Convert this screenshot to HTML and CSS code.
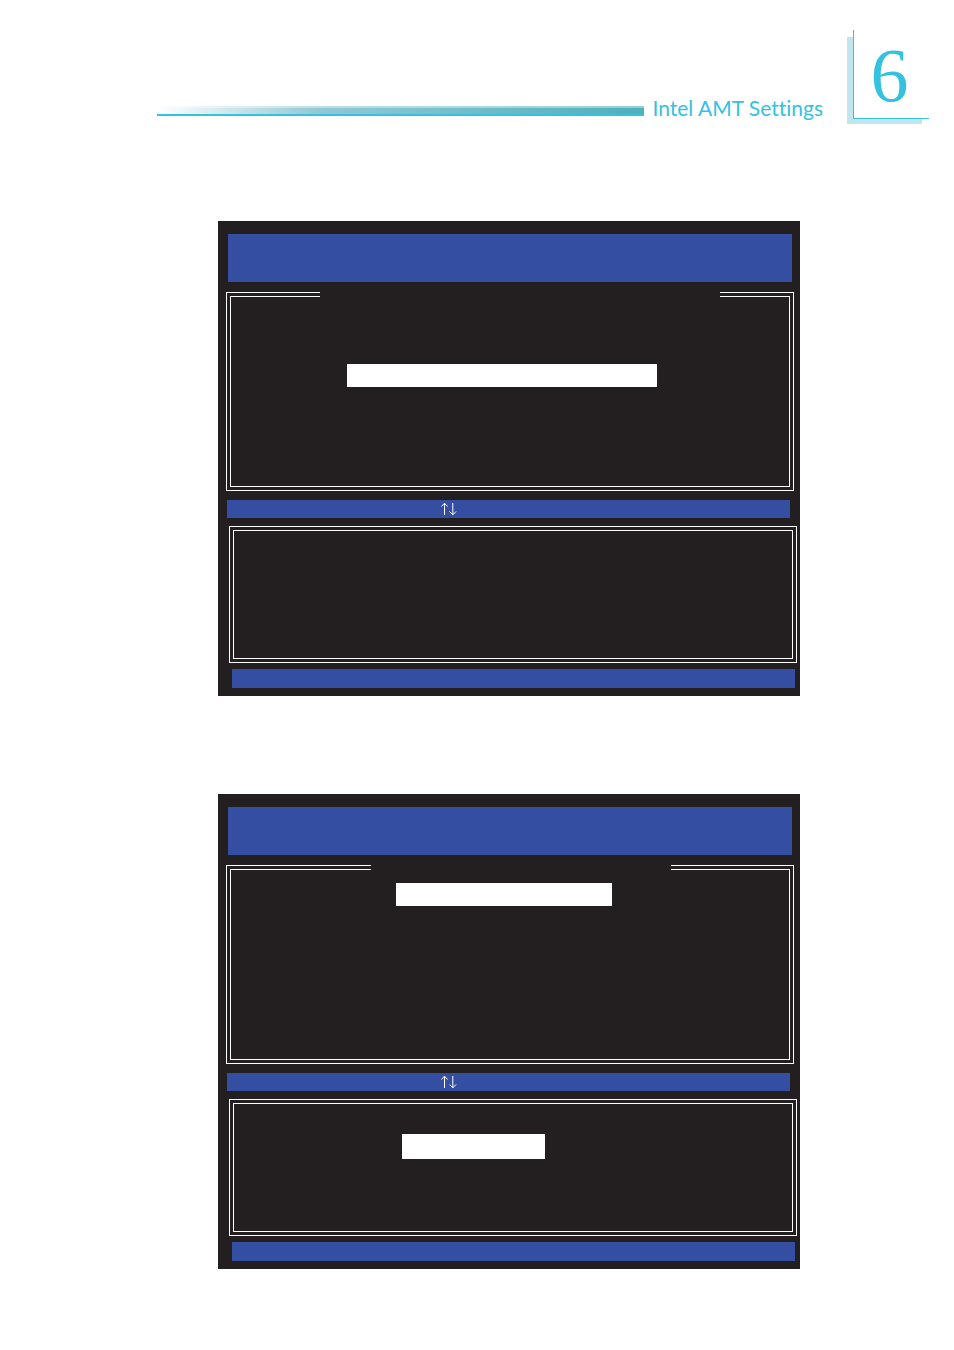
FILE: index.html
```
<!DOCTYPE html>
<html lang="en">
  <head>
    <meta charset="UTF-8" />
    <meta name="viewport" content="width=device-width, initial-scale=1.0" />
    <title>Intel AMT Settings</title>
    <link rel="stylesheet" href="styles.css">
  </head>
  <body>
    <header class="page-header">
      <div class="rule"></div>
      <h1>Intel AMT Settings</h1>
      <div class="chapter"><span>6</span></div>
    </header>
    <main>
      <section class="screen">
        <div class="title-bar"></div>
        <div class="frame menu">
          <div class="caption-gap wide"></div>
          <div class="frame-inner">
            <div class="selected menu-item"></div>
          </div>
        </div>
        <div class="key-bar">
          <svg class="arrows" viewBox="0 0 16 14" role="img" aria-label="↑↓">
            <path d="M3.5 13V1M0.5 4.5L3.5 1.2L6.5 4.5" />
            <path d="M11.8 1V13M8.5 9.5L11.8 12.8L15 9.5" />
          </svg>
        </div>
        <div class="frame detail">
          <div class="frame-inner"></div>
        </div>
        <div class="status-bar"></div>
      </section>
      <section class="screen">
        <div class="title-bar"></div>
        <div class="frame menu">
          <div class="caption-gap narrow"></div>
          <div class="frame-inner">
            <div class="selected first-item"></div>
          </div>
        </div>
        <div class="key-bar">
          <svg class="arrows" viewBox="0 0 16 14" role="img" aria-label="↑↓">
            <path d="M3.5 13V1M0.5 4.5L3.5 1.2L6.5 4.5" />
            <path d="M11.8 1V13M8.5 9.5L11.8 12.8L15 9.5" />
          </svg>
        </div>
        <div class="frame detail">
          <div class="frame-inner">
            <div class="selected option"></div>
          </div>
        </div>
        <div class="status-bar"></div>
      </section>
    </main>
  </body>
</html>
```
FILE: styles.css
```
* {
  box-sizing: border-box;
}
body {
  margin: 0;
  background-color: #fff;
  font-family: "Liberation Sans", Arial, sans-serif;
}

/* chapter header */
.page-header {
  display: flex;
  align-items: flex-end;
  padding: 30px 25px 0 157px;
  color: #34c2df;
}
.rule {
  flex: 1;
  height: 10px;
  margin-bottom: 8px;
  border-bottom: 2px solid #34c2df;
  background: linear-gradient(to bottom, rgba(255, 255, 255, 0.4) 2px, transparent 2px),
    linear-gradient(to right, #fff, #91c9d5 33%, #4eafbd);
}
h1 {
  margin: 0 24px 0 8px;
  font-family: Lato, sans-serif;
  font-size: 21px;
  font-weight: 400;
  font-variant-ligatures: none;
  line-height: 32px;
}
.chapter {
  position: relative;
  width: 82px;
  height: 94px;
  padding: 0 0 5px 6px;
}
.chapter::before {
  content: "";
  position: absolute;
  left: 0;
  top: 7px;
  right: 7px;
  bottom: 0;
  background-color: #c0e7ef;
}
.chapter span {
  position: relative;
  display: block;
  height: 89px;
  padding-right: 4px;
  border-left: 1px solid #34c2df;
  border-bottom: 1px solid #34c2df;
  background-color: #fff;
  font-family: "Liberation Serif", serif;
  font-size: 76px;
  line-height: 90px;
  text-align: center;
}

/* BIOS screens */
main {
  display: flex;
  flex-direction: column;
  gap: 98px;
  padding: 97px 154px 81px 218px;
}
.screen {
  padding: 13px 3px 8px 8px;
  background-color: #231f20;
}
.title-bar,
.key-bar,
.status-bar {
  background-color: #344fa1;
}
.title-bar {
  height: 48px;
  margin: 0 5px 10px 2px;
}
.frame {
  position: relative;
  padding: 3px;
  border: 1px solid #fff;
}
.frame-inner {
  height: 100%;
  border: 1px solid #fff;
}
.menu {
  height: 199px;
  margin-right: 3px;
}
.detail {
  height: 137px;
  margin-left: 3px;
}
/* opening in the top border where the caption sits */
.caption-gap {
  position: absolute;
  top: -1px;
  height: 5px;
  background-color: #231f20;
}
.wide {
  left: 93px;
  right: 73px;
}
.narrow {
  left: 144px;
  right: 122px;
}
.key-bar {
  display: flex;
  align-items: center;
  height: 18px;
  margin: 9px 7px 8px 1px;
  padding-left: 214px;
}
.arrows {
  width: 16px;
  height: 14px;
  fill: none;
  stroke: #fff;
  stroke-width: 1;
}
.status-bar {
  height: 19px;
  margin: 6px 2px 0 6px;
}
.selected {
  height: 23px;
  background-color: #fff;
}
.menu-item {
  margin: 67px 132px 0 116px;
}
.first-item {
  margin: 13px 177px 0 165px;
}
.option {
  height: 25px;
  margin: 30px 247px 0 168px;
}
```
